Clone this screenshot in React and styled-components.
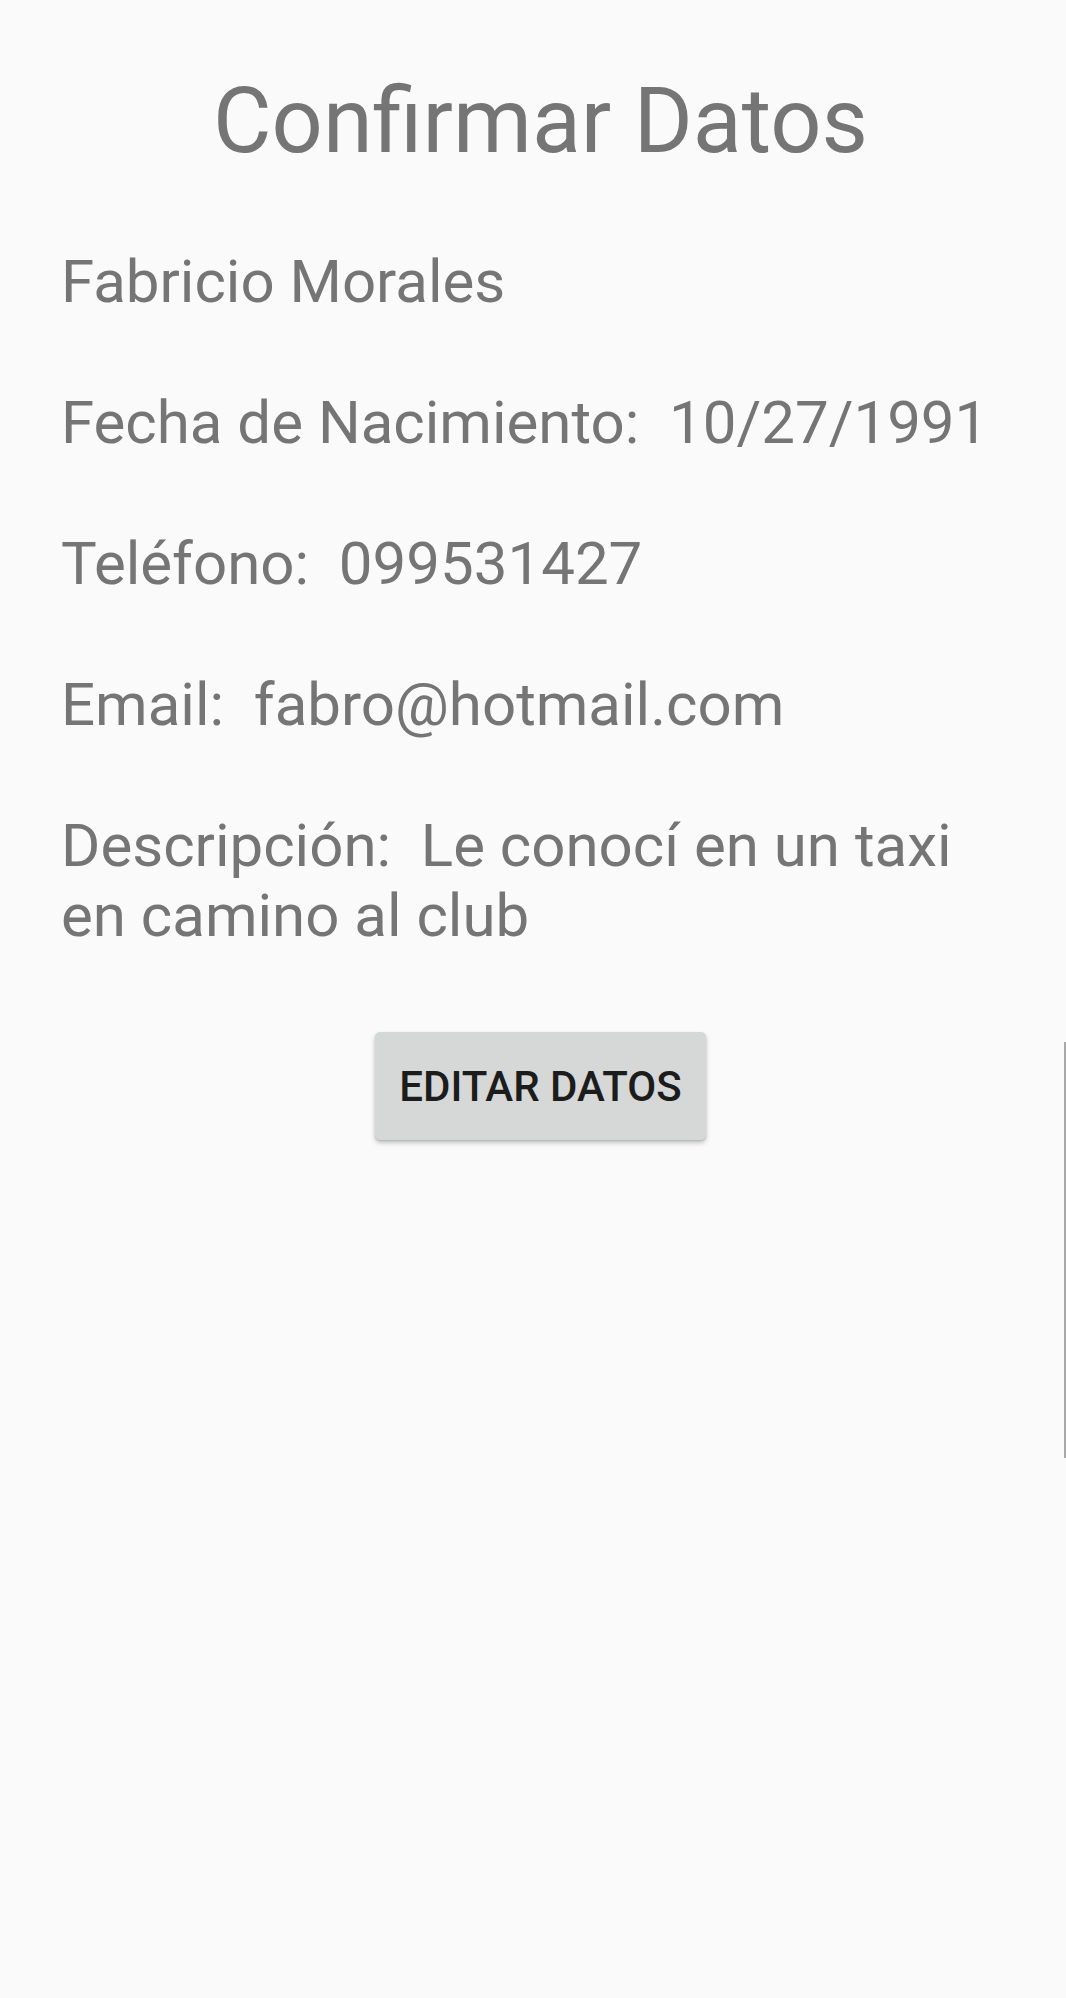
import React from 'react'
import styled, { createGlobalStyle } from 'styled-components'

const GlobalStyle = createGlobalStyle`
  html, body {
    margin: 0;
    padding: 0;
    background: #fafafa;
  }
  body {
    font-family: Roboto, "Noto Sans", sans-serif;
  }
`

const Screen = styled.div`
  position: relative;
  min-height: 1998px;
  box-sizing: border-box;
  padding: 69px 46px 0 61px;
  background: #fafafa;
  color: #757575;
`

const Title = styled.h1`
  margin: 0 0 73px;
  font-size: 90px;
  font-weight: 400;
  line-height: normal;
  text-align: center;
`

const Details = styled.div`
  display: flex;
  flex-direction: column;
  gap: 71px;
`

const Field = styled.p`
  margin: 0;
  font-size: 60px;
  line-height: 70px;
  white-space: pre-wrap;
`

const Actions = styled.div`
  display: flex;
  justify-content: center;
  margin-top: 81px;
`

const Button = styled.button`
  height: 108px;
  padding: 0 24px;
  border: none;
  border-radius: 5px;
  background: #d6d7d7;
  color: #1c1c1c;
  font-family: Roboto, sans-serif;
  font-size: 42px;
  font-weight: 500;
  box-shadow: 0 3px 5px rgba(0, 0, 0, 0.22), 0 1px 2px rgba(0, 0, 0, 0.12);
`

const ScrollThumb = styled.div`
  position: absolute;
  right: 0;
  top: 1042px;
  width: 2px;
  height: 416px;
  background: #a8a8a8;
`

const fields = [
  { label: null, value: 'Fabricio Morales' },
  { label: 'Fecha de Nacimiento', value: '10/27/1991' },
  { label: 'Teléfono', value: '099531427' },
  { label: 'Email', value: 'fabro@hotmail.com' },
  { label: 'Descripción', value: 'Le conocí en un taxi en camino al club' },
]

function App() {
  return (
    <Screen>
      <GlobalStyle />
      <Title>Confirmar Datos</Title>
      <Details>
        {fields.map(f => (
          <Field key={f.value}>
            {f.label ? `${f.label}:  ${f.value}` : f.value}
          </Field>
        ))}
      </Details>
      <Actions>
        <Button type="button">EDITAR DATOS</Button>
      </Actions>
      <ScrollThumb />
    </Screen>
  )
}

export default App
